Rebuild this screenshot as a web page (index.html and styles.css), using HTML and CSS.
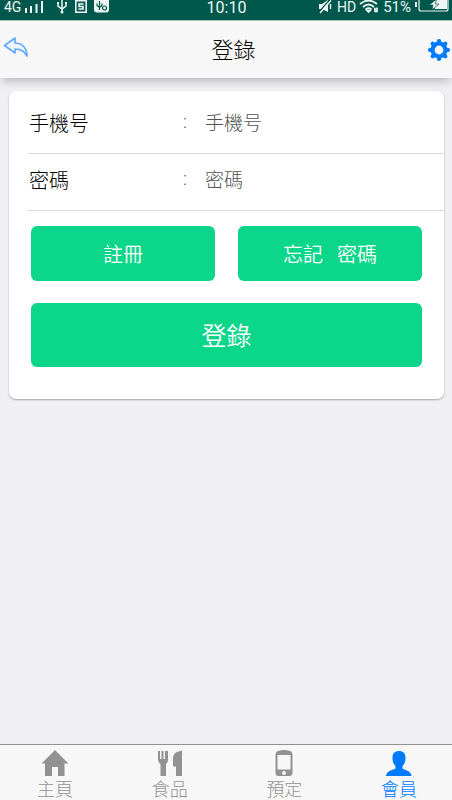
FILE: index.html
```html
<!DOCTYPE html>
<html lang="zh-Hant">
<head>
<meta charset="utf-8">
<meta name="viewport" content="width=device-width, initial-scale=1">
<title>登錄</title>
<link rel="stylesheet" href="styles.css">
</head>
<body>
<div class="status">
  <div class="status-left">
    <span class="network">4G</span>
    <svg class="signal" width="19" height="12" viewBox="0 0 19 12" fill="currentColor"><path d="M0 7h2v5H0zM5 5h2v7H5zM10.500 3h2v9h-2zM16 0h2v12h-2z"/></svg>
    <svg class="usb" width="12" height="14" viewBox="0 0 12 14" fill="none" stroke="currentColor" stroke-width="1.500"><path d="M6 0v12M2 3v3l4 3 4-3V3"/><path d="M1 2h2v2H1zM9 2h2v2H9z" fill="currentColor" stroke="none"/><circle cx="6" cy="12" r="1.500" fill="currentColor" stroke="none"/></svg>
    <svg class="app" width="12" height="14" viewBox="0 0 12 14" fill="none" stroke="currentColor"><path d="M.8 .8h10.400v11.400H.8z" stroke-width="1.600"/><path d="M8.500 4H4v2.500h4V9H3.500" stroke-width="1.600"/></svg>
    <svg width="15" height="14" viewBox="0 0 15 14"><rect y="-2" width="15" height="14.500" rx="3" fill="currentColor"/><path d="M5.500 1v9M3 3.500v2l2.500 2L8 5.500v-2" fill="none" stroke="#00574b" stroke-width="1.200"/><circle cx="10.500" cy="8" r="2" fill="none" stroke="#00574b" stroke-width="1.200"/></svg>
  </div>
  <time class="clock">10:10</time>
  <div class="status-right">
    <svg class="mute" width="13" height="14" viewBox="0 0 13 14"><path d="M0 4h3l6-4v12L3 9H0z" fill="currentColor"/><path d="M0 12 10.500 0" stroke="#00574b" stroke-width="1.300"/><path d="M1 13 12 .5M11.500 4v5" stroke="currentColor" stroke-width="1.400"/></svg>
    <span class="hd">HD</span>
    <svg class="wifi" width="20" height="14" viewBox="0 0 20 14" fill="none" stroke="currentColor" stroke-width="1.700"><path d="M1 4Q9.500-3 18 4M4 7Q9.500 2 15 7M6.500 9.500Q9.500 7 12.500 9.500"/><path d="m8 10.500 1.500 1.500 1.500-1.500zM15 8.500h1v3h2v-4"/></svg>
    <span class="charge">51%</span>
    <svg width="34" height="14" viewBox="0 0 34 14"><path d="M4 0v9q0 2 2 2h25q2 0 2-2V0" fill="none" stroke="currentColor" stroke-width="1.200"/><path d="M0 2h2v5H0zM20 0h12v9H20z" fill="currentColor"/><path d="m22-1-8 6h4l-1 5 7-6h-4z" fill="currentColor" stroke="#00574b" stroke-width=".7"/></svg>
  </div>
</div>
<header class="header">
  <button class="icon-button back" type="button" aria-label="返回"><svg width="26" height="22" viewBox="0 0 26 22"><path d="M1.500 8.500 12 1v5c7 0 12 5 12 13-2.500-5-6-7-12-7v4z" fill="#edf5ff" stroke="#63a9ff" stroke-width="1.700" stroke-linejoin="round"/></svg></button>
  <h1 class="title">登錄</h1>
  <button class="icon-button settings" type="button" aria-label="設定"><svg width="22" height="22" viewBox="-11 -11 22 22"><g fill="#007aff"><path id="tooth" d="M-2.500-7-1.800-10q.3-1 1.800-1t1.800 1L2.500-7z"/><use href="#tooth" transform="rotate(45)"/><use href="#tooth" transform="rotate(90)"/><use href="#tooth" transform="rotate(135)"/><use href="#tooth" transform="rotate(180)"/><use href="#tooth" transform="rotate(225)"/><use href="#tooth" transform="rotate(270)"/><use href="#tooth" transform="rotate(315)"/></g><circle r="6.400" fill="none" stroke="#007aff" stroke-width="4"/></svg></button>
</header>
<main class="main">
  <form class="card">
    <div class="field"><label for="phone">手機号</label><span class="colon">:</span><input id="phone" type="tel" placeholder="手機号"></div>
    <div class="field"><label for="password">密碼</label><span class="colon">:</span><input id="password" type="password" placeholder="密碼"></div>
    <div class="actions">
      <button class="button" type="button">註冊</button>
      <button class="button" type="button"><span>忘記</span><span>密碼</span></button>
      <button class="button login" type="submit">登錄</button>
    </div>
  </form>
</main>
<nav class="tabs">
  <a class="tab" href="#home"><svg width="28" height="28" viewBox="0 0 28 28" fill="currentColor"><path d="M14 1 .5 14.500H4V27h7v-9h6v9h6.500V14.500h4z"/></svg>主頁</a>
  <a class="tab" href="#food"><svg width="28" height="28" viewBox="0 0 28 28" fill="currentColor"><path d="M2 2h2v8h1.500V2h2v8H9V2h3v9q0 2.500-2 4v12H4.500V15Q2 13.500 2 11zM26 1.500V27h-6V17.500h-3V10q0-5.500 4-7z"/></svg>食品</a>
  <a class="tab" href="#booking"><svg width="28" height="28" viewBox="0 0 28 28"><path d="M8 2q6-2 12 0 2.500.5 2.500 3v19q0 3-3 3h-11q-3 0-3-3V5Q5.500 2.500 8 2zM7.500 6v14.500h13V6z" fill="currentColor" fill-rule="evenodd"/><circle cx="14" cy="24" r="2" fill="#f7f7f7"/></svg>預定</a>
  <a class="tab active" href="#member" aria-current="page"><svg width="28" height="28" viewBox="0 0 28 28" fill="currentColor"><path d="M14 2c4 0 6.500 2 6.500 7 0 3-.8 6-3 8v2.500c1 1.500 9 2 9 7.500H1c0-5.500 8-6 9.500-7.500V17c-2.200-2-3-5-3-8 0-5 2.500-7 6.500-7z"/></svg>會員</a>
</nav>
</body>
</html>
```
FILE: styles.css
```css
* { box-sizing: border-box; }

body {
  margin: 0;
  min-height: 100vh;
  display: flex;
  flex-direction: column;
  background: #efeff4;
  color: #000;
  font-family: Roboto, "Noto Sans CJK TC", sans-serif;
  font-weight: 300;
}

svg { display: block; flex: none; }

button, input {
  font: inherit;
  border: 0;
  padding: 0;
  background: none;
}

.status {
  display: grid;
  grid-template-columns: 1fr auto 1fr;
  height: 21px;
  padding: 0 3px 6px 4px;
  align-items: center;
  background: #00574b;
  border-bottom: 1px solid #b2c2bf;
  color: #edf6f4;
  font-size: 14px;
  font-weight: 400;
  line-height: 14px;
}

.status-left, .status-right { display: flex; align-items: center; }
.status-right { justify-content: flex-end; }
.signal { margin-left: 4px; }
.usb { margin-left: 12px; }
.app { margin: 0 7px 0 7px; }
.clock { font-size: 16px; line-height: 12px; padding-top: 2px; }
.hd { margin: 0 3px 0 5px; }
.wifi { margin-right: 4px; }
.charge { margin-right: 4px; font-size: 15px; }

.header {
  display: grid;
  grid-template-columns: 48px 1fr 48px;
  align-items: center;
  height: 57px;
  background: #f7f7f7;
  box-shadow: 0 6px 8px -2px rgba(0, 0, 0, .2);
}

.title {
  margin: 0;
  padding: 0 0 4px 15px;
  text-align: center;
  font-size: 22px;
  font-weight: 300;
}

.icon-button { display: flex; }
.back { padding: 0 0 4px 3px; }
.settings { justify-content: flex-end; padding: 0 2px 0 0; }

.main { flex: 1; padding: 13px 8px 13px 9px; }

.card {
  padding: 6px 0 32px 19px;
  border-radius: 7px;
  background: #fff;
  box-shadow: 0 1px 2px rgba(0, 0, 0, .3);
}

.field {
  display: grid;
  grid-template-columns: 155px 22px 1fr;
  align-items: center;
  height: 57px;
  border-bottom: 1px solid #d9d9dc;
  font-size: 20px;
}

.field label { padding: 0 0 6px 1px; }
.colon { padding-bottom: 8px; color: #555; font-size: 19px; }

.field input {
  min-width: 0;
  width: 100%;
  padding-bottom: 3px;
  font-size: 19px;
  outline: 0;
}

.field input::placeholder { color: #555; opacity: 1; }

.actions {
  display: grid;
  grid-template-columns: 1fr 1fr;
  gap: 22px 23px;
  padding: 15px 22px 0 3px;
}

.button {
  display: flex;
  align-items: center;
  justify-content: center;
  gap: 14px;
  height: 55px;
  border-radius: 6px;
  background: #0cd68a;
  color: #fff;
  font-size: 20px;
  font-weight: 350;
}

.login { grid-column: 1 / -1; height: 64px; padding-bottom: 3px; font-size: 25px; }

.tabs {
  display: flex;
  justify-content: space-between;
  height: 56px;
  padding: 4px 35px 0 37px;
  border-top: 1px solid #929292;
  background: #f7f7f7;
}

.tab {
  display: flex;
  flex-direction: column;
  align-items: center;
  gap: 3px;
  color: #929292;
  font-size: 18px;
  line-height: 20px;
  text-decoration: none;
}

.active { color: #007aff; }
```
